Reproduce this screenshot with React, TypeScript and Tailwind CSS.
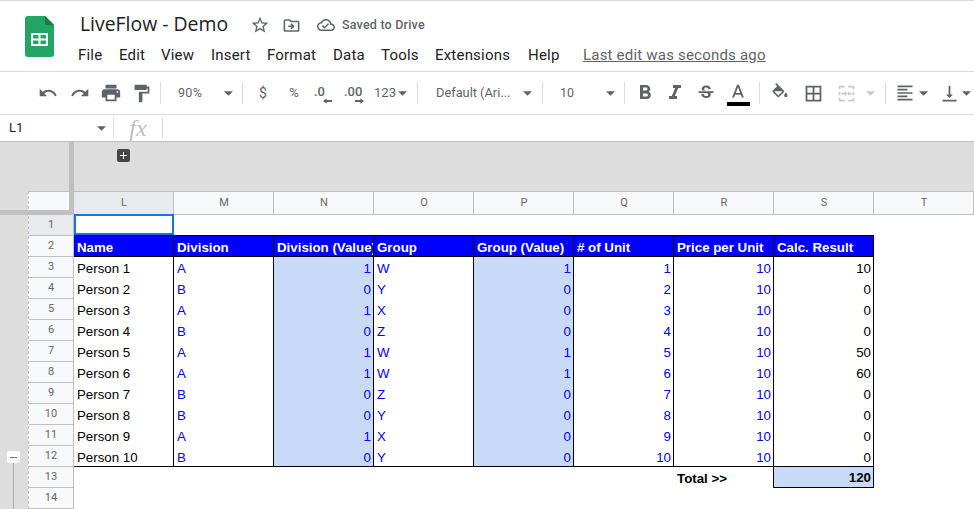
import type { ReactNode } from 'react'

const ROWS = [
  ['Person 1', 'A', 1, 'W', 1, 1, 10, 10],
  ['Person 2', 'B', 0, 'Y', 0, 2, 10, 0],
  ['Person 3', 'A', 1, 'X', 0, 3, 10, 0],
  ['Person 4', 'B', 0, 'Z', 0, 4, 10, 0],
  ['Person 5', 'A', 1, 'W', 1, 5, 10, 50],
  ['Person 6', 'A', 1, 'W', 1, 6, 10, 60],
  ['Person 7', 'B', 0, 'Z', 0, 7, 10, 0],
  ['Person 8', 'B', 0, 'Y', 0, 8, 10, 0],
  ['Person 9', 'A', 1, 'X', 0, 9, 10, 0],
  ['Person 10', 'B', 0, 'Y', 0, 10, 10, 0],
] as const

const HEADERS = ['Name', 'Division', 'Division (Value)', 'Group', 'Group (Value)', '# of Unit', 'Price per Unit', 'Calc. Result']
const COLS = ['L', 'M', 'N', 'O', 'P', 'Q', 'R', 'S', 'T']
const MENU = [
  ['File', 'w-[41px]'], ['Edit', 'w-[42px]'], ['View', 'w-[50px]'], ['Insert', 'w-[56px]'],
  ['Format', 'w-[66px]'], ['Data', 'w-[48px]'], ['Tools', 'w-[54px]'], ['Extensions', 'w-[93px]'], ['Help', 'w-[55px]'],
] as const

function Icon({ d, size = 18, color = '#5f6368' }: { d: string; size?: number; color?: string }) {
  return (
    <svg width={size} height={size} viewBox="0 0 24 24" fill={color} className="shrink-0">
      <path d={d} />
    </svg>
  )
}

function Caret({ color = '#5f6368' }: { color?: string }) {
  return (
    <svg width="9" height="5" viewBox="0 0 10 5" fill={color} className="shrink-0">
      <path d="M0 0h10L5 5z" />
    </svg>
  )
}

function Sep() {
  return <div className="h-[22px] w-px shrink-0 bg-[#dadce0]" />
}

function Slot({ w, children }: { w: string; children?: ReactNode }) {
  return <div className={`flex h-full shrink-0 items-center justify-center ${w}`}>{children}</div>
}

function Arrow({ left }: { left?: boolean }) {
  return (
    <svg width="9" height="6" viewBox="0 0 10 6" fill="#5f6368" className={`self-end ${left ? 'rotate-180' : ''}`}>
      <path d="M0 2h6V0l4 3-4 3V4H0z" />
    </svg>
  )
}

function SheetsLogo() {
  return (
    <svg width="29" height="41" viewBox="0 0 29 41" className="shrink-0">
      <path d="M3 0h17l9 9v29a3 3 0 0 1-3 3H3a3 3 0 0 1-3-3V3a3 3 0 0 1 3-3z" fill="#23a566" />
      <path d="M20 0l9 9h-7a2 2 0 0 1-2-2z" fill="#188038" />
      <path d="M6 17h17v13H6z" fill="#fff" />
      <path d="M8 19h5.500v3.500H8zM15.500 19H21v3.500h-5.500zM8 24.500h5.500V28H8zM15.500 24.500H21V28h-5.500z" fill="#23a566" />
    </svg>
  )
}

function Toolbar() {
  return (
    <div className="flex h-[43px] items-center border-b border-[#dadce0] pl-[32px] font-['Roboto',sans-serif] text-[#5f6368]">
      <Slot w="w-[32px]"><Icon size={20} d="M12.500 8c-2.650 0-5.050.99-6.900 2.600L2 7v9h9l-3.620-3.620c1.390-1.160 3.160-1.880 5.120-1.880 3.540 0 6.550 2.310 7.600 5.500l2.370-.78C21.080 11.030 17.150 8 12.500 8z" /></Slot>
      <Slot w="w-[32px]"><Icon size={20} d="M18.400 10.600C16.550 8.990 14.150 8 11.500 8c-4.650 0-8.580 3.030-9.960 7.220L3.900 16c1.050-3.190 4.050-5.500 7.600-5.500 1.950 0 3.730.72 5.120 1.880L13 16h9V7l-3.600 3.600z" /></Slot>
      <Slot w="w-[29px]"><Icon size={22} d="M19 8H5c-1.660 0-3 1.340-3 3v6h4v4h12v-4h4v-6c0-1.660-1.340-3-3-3zm-3 11H8v-5h8v5zm3-7c-.55 0-1-.45-1-1s.45-1 1-1 1 .45 1 1-.45 1-1 1zm-1-9H6v4h12V3z" /></Slot>
      <Slot w="w-[32px]"><Icon size={21} d="M18 4V3c0-.55-.45-1-1-1H5c-.55 0-1 .45-1 1v4c0 .55.45 1 1 1h12c.55 0 1-.45 1-1V6h1v4H9v11c0 .55.45 1 1 1h2c.55 0 1-.45 1-1v-9h8V4h-3z" /></Slot>
      <Slot w="w-[3px]" />
      <Sep />
      <div className="flex h-full w-[81px] shrink-0 items-center pl-[17px] text-[12.5px]">
        <span className="w-[46px] tracking-[.3px]">90%</span>
        <Caret />
      </div>
      <Sep />
      <Slot w="w-[40px]"><span className="text-[14px]">$</span></Slot>
      <Slot w="w-[22px]"><span className="text-[13px]">%</span></Slot>
      <Slot w="w-[36px]">
        <div className="flex w-[18px] flex-col pt-[3px] leading-none">
          <span className="text-[13px] font-medium leading-[13px]">.0</span>
          <Arrow left />
        </div>
      </Slot>
      <Slot w="w-[26px]">
        <div className="flex w-[20px] flex-col pt-[3px] leading-none">
          <span className="text-[13px] font-medium leading-[13px]">.00</span>
          <Arrow />
        </div>
      </Slot>
      <Slot w="w-[47px]">
        <span className="text-[13px]">123</span>
        <span className="ml-[2px]"><Caret /></span>
      </Slot>
      <Slot w="w-[3px]" />
      <Sep />
      <div className="flex h-full w-[124px] shrink-0 items-center pl-[18px] text-[12.8px]">
        <span className="w-[87px] whitespace-nowrap">Default (Ari...</span>
        <Caret />
      </div>
      <Sep />
      <div className="flex h-full w-[81px] shrink-0 items-center pl-[17px] text-[12.5px]">
        <span className="w-[46px]">10</span>
        <Caret />
      </div>
      <Sep />
      <Slot w="w-[39px]"><Icon size={24} d="M15.600 10.790c.97-.67 1.650-1.770 1.650-2.790 0-2.260-1.750-4-4-4H7v14h7.040c2.090 0 3.710-1.700 3.710-3.790 0-1.520-.86-2.820-2.150-3.420zM10 6.500h3c.83 0 1.500.67 1.500 1.500s-.67 1.500-1.500 1.500h-3v-3zm3.500 9H10v-3h3.500c.83 0 1.500.67 1.500 1.500s-.67 1.500-1.500 1.500z" /></Slot>
      <Slot w="w-[21px]"><Icon size={24} d="M10 4v3h2.210l-3.420 8H6v3h8v-3h-2.210l3.420-8H18V4z" /></Slot>
      <Slot w="w-[41px]"><Icon size={20} d="M7.240 8.750c-.26-.48-.39-1.030-.39-1.670 0-.61.13-1.160.4-1.670.26-.5.63-.93 1.110-1.290.48-.35 1.050-.63 1.700-.83.66-.19 1.390-.29 2.180-.29.81 0 1.540.11 2.210.34.66.22 1.230.54 1.690.94.47.4.83.88 1.080 1.430.25.55.38 1.150.38 1.810h-3.010c0-.31-.05-.59-.15-.85-.09-.27-.24-.49-.44-.68-.2-.19-.45-.33-.75-.44-.3-.1-.66-.16-1.060-.16-.39 0-.74.04-1.030.13-.29.09-.53.21-.72.36-.19.16-.34.34-.44.55-.1.21-.15.43-.15.66 0 .48.25.88.74 1.210.38.25.77.48 1.410.7H7.390c-.05-.08-.11-.17-.15-.25zM21 12v-2H3v2h9.620c.18.07.4.14.55.2.37.17.66.34.87.51.21.17.35.36.43.57.07.2.11.43.11.69 0 .23-.05.45-.14.66-.09.2-.23.38-.42.53-.19.15-.42.26-.71.35-.29.08-.63.13-1.010.13-.43 0-.83-.04-1.180-.13s-.66-.23-.91-.42c-.25-.19-.45-.44-.59-.75-.14-.31-.25-.76-.25-1.210H6.400c0 .55.08 1.130.24 1.580.16.45.37.85.65 1.210.28.35.6.66.98.92.37.26.78.48 1.220.65.44.17.9.3 1.380.39.48.08.96.13 1.440.13.8 0 1.530-.09 2.180-.28s1.210-.45 1.670-.79c.46-.34.82-.77 1.070-1.270s.38-1.070.38-1.710c0-.6-.1-1.140-.31-1.610-.05-.11-.11-.23-.17-.33H21z" /></Slot>
      <Slot w="w-[24px]">
        <div className="flex flex-col items-center pt-[1px]">
          <Icon size={22} color="#5f6368" d="M11 3L5.500 17h2.250l1.120-3h6.250l1.120 3h2.250L13 3h-2zm-1.380 9L12 5.670 14.380 12H9.620z" />
          <div className="-mt-[2px] h-[4px] w-[23px] bg-black" />
        </div>
      </Slot>
      <Slot w="w-[9px]" />
      <Sep />
      <Slot w="w-[40px]"><Icon size={20} d="M16.560 8.940L7.620 0 6.210 1.410l2.380 2.380-5.150 5.150c-.59.59-.59 1.540 0 2.120l5.500 5.500c.29.29.68.44 1.060.44s.77-.15 1.060-.44l5.500-5.500c.59-.58.59-1.530 0-2.120zM5 10h10l-5 5zM19 11.500s-2 2.170-2 3.500c0 1.100.9 2 2 2s2-.9 2-2c0-1.330-2-3.500-2-3.500z" /></Slot>
      <Slot w="w-[26px]"><Icon size={21} d="M3 3v18h18V3H3zm8 16H5v-6h6v6zm0-8H5V5h6v6zm8 8h-6v-6h6v6zm0-8h-6V5h6v6z" /></Slot>
      <Slot w="w-[40px]"><Icon size={21} color="#c7c9cc" d="M3 3h7v2H5v2H3zM14 3h7v4h-2V5h-5zM3 10h2v4H3zM19 10h2v4h-2zM3 17h2v2h5v2H3zM19 17h2v4h-7v-2h5zM6 11h4V9l3 3-3 3v-2H6zM18 13h-3v2l-2-3 2-3v2h3z" /></Slot>
      <Slot w="w-[9px]"><Caret color="#c7c9cc" /></Slot>
      <Slot w="w-[10px]" />
      <Sep />
      <Slot w="w-[11px]" />
      <Slot w="w-[16px]"><Icon size={20} d="M15 15H3v2h12v-2zm0-8H3v2h12V7zM3 13h18v-2H3v2zm0 8h18v-2H3v2zM3 3v2h18V3H3z" /></Slot>
      <Slot w="w-[20px]"><Caret /></Slot>
      <Slot w="w-[4px]" />
      <Slot w="w-[24px]"><Icon size={21} d="M16 13h-3V3h-2v10H8l4 4 4-4zM4 19v2h16v-2H4z" /></Slot>
      <Slot w="w-[10px]"><Caret /></Slot>
    </div>
  )
}

function Cell({ className = '', low, children }: { className?: string; low?: boolean; children?: ReactNode }) {
  return (
    <div className={`flex h-[21px] w-[100px] shrink-0 items-center overflow-hidden whitespace-nowrap border-r border-black pl-[3px] pr-[2px] ${low ? 'pt-[3px]' : 'pt-[2px]'} ${className}`}>
      {children}
    </div>
  )
}

function RowHead({ n, className = 'bg-[#f8f9fa]' }: { n: number; className?: string }) {
  return (
    <div className={`flex h-[21px] w-[45px] shrink-0 items-center justify-center border-b border-r border-[#c0c0c0] font-['Roboto',sans-serif] text-[11px] text-[#666] ${className}`}>
      {n}
    </div>
  )
}

function Sheet() {
  return (
    <div className="flex-1 overflow-hidden border-l border-dashed border-[#c0c0c0] bg-white font-['Liberation_Sans',Arial,sans-serif] text-[13.3px]">
      {/* column letters */}
      <div className="flex h-[24px] border-b border-t border-[#c0c0c0] bg-[#f8f9fa] font-['Roboto',sans-serif] text-[11px] text-[#666]">
        <div className="w-[45px] shrink-0 border-r border-[#c0c0c0]" />
        {COLS.map((c, i) => (
          <div key={c} className={`flex w-[100px] shrink-0 items-center justify-center border-r border-[#c0c0c0] pl-px ${i === 0 ? 'bg-[#e8eaed]' : ''}`}>{c}</div>
        ))}
      </div>

      <div className="flex h-[21px]">
        <RowHead n={1} className="bg-[#e8eaed]" />
        <div className="h-[21px] w-[100px] shrink-0 border-b border-black">
          <div className="-mt-px h-[21px] w-full border-2 border-[#1a73e8] bg-white" />
        </div>
        <div className="h-[21px] w-[700px] shrink-0 border-b border-black" />
      </div>

      <div className="flex h-[21px]">
        <RowHead n={2} />
        {HEADERS.map(h => (
          <Cell key={h} low className="border-b bg-[#0000ff] font-bold text-white">{h}</Cell>
        ))}
      </div>

      {ROWS.map((r, i) => {
        const isLast = i === 9
        const last = isLast ? 'border-b' : ''
        return (
          <div key={r[0]} className="flex h-[21px]">
            <RowHead n={i + 3} />
            <Cell low={isLast} className={`text-black ${last}`}>{r[0]}</Cell>
            <Cell low={isLast} className={`text-[#0000ff] ${last}`}>{r[1]}</Cell>
            <Cell low={isLast} className={`justify-end bg-[#c9daf8] text-[#0000ff] ${last}`}>{r[2]}</Cell>
            <Cell low={isLast} className={`text-[#0000ff] ${last}`}>{r[3]}</Cell>
            <Cell low={isLast} className={`justify-end bg-[#c9daf8] text-[#0000ff] ${last}`}>{r[4]}</Cell>
            <Cell low={isLast} className={`justify-end text-[#0000ff] ${last}`}>{r[5]}</Cell>
            <Cell low={isLast} className={`justify-end text-[#0000ff] ${last}`}>{r[6]}</Cell>
            <Cell low={isLast} className={`justify-end text-black ${last}`}>{r[7]}</Cell>
          </div>
        )
      })}

      <div className="flex h-[21px]">
        <RowHead n={13} />
        <div className="w-[600px] shrink-0" />
        <Cell className="font-bold text-black">Total &gt;&gt;</Cell>
        <Cell className="justify-end border-b bg-[#c9daf8] font-bold text-black">120</Cell>
      </div>

      <div className="flex h-[21px]">
        <RowHead n={14} />
      </div>
    </div>
  )
}

export default function App() {
  return (
    <div className="relative flex h-[509px] w-[974px] flex-col overflow-hidden bg-white font-['Roboto',sans-serif]">
      {/* title + menu */}
      <div className="flex h-[72px] border-b border-t border-[#dadce0]">
        <div className="flex w-[80px] shrink-0 pl-[25px] pt-[15px]"><SheetsLogo /></div>
        <div className="flex flex-col">
          <div className="flex h-[36px] items-end">
            <span className="w-[170px] whitespace-nowrap font-['Open_Sans',sans-serif] text-[19.4px] leading-[26px] text-[#202124]">LiveFlow - Demo</span>
            <div className="mb-[2px] flex items-center">
              <Icon size={20} d="M22 9.240l-7.190-.62L12 2 9.190 8.630 2 9.240l5.460 4.730L5.820 21 12 17.270 18.180 21l-1.630-7.030L22 9.240zM12 15.400l-3.760 2.270 1-4.280-3.320-2.880 4.380-.38L12 6.100l1.710 4.040 4.380.38-3.320 2.880 1 4.280L12 15.400z" />
              <span className="ml-[12px]"><Icon size={19} d="M20 6h-8l-2-2H4c-1.100 0-2 .9-2 2v12c0 1.100.9 2 2 2h16c1.100 0 2-.9 2-2V8c0-1.100-.9-2-2-2zm0 12H4V6h5.170l2 2H20v10zM12.160 14H8v-2h4.160L10.600 10.400 12 9l4 4-4 4-1.400-1.400z" /></span>
              <span className="ml-[16px]"><Icon size={18} d="M19.350 10.040C18.670 6.590 15.640 4 12 4 9.110 4 6.600 5.640 5.350 8.040 2.340 8.360 0 10.910 0 14c0 3.310 2.690 6 6 6h13c2.760 0 5-2.240 5-5 0-2.640-2.050-4.780-4.650-4.960zM19 18H6c-2.210 0-4-1.790-4-4 0-2.050 1.530-3.760 3.560-3.970l1.070-.11.5-.95C8.080 7.140 9.940 6 12 6c2.620 0 4.880 1.860 5.390 4.430l.3 1.500 1.530.11c1.560.1 2.780 1.410 2.780 2.960 0 1.650-1.350 3-3 3zm-9-3.820l-2.090-2.090L6.500 13.500 10 17l6.010-6.010-1.410-1.410z" /></span>
              <span className="ml-[7px] whitespace-nowrap text-[12.5px] font-medium tracking-[.2px] text-[#5f6368]">Saved to Drive</span>
            </div>
          </div>
          <div className="-ml-[2px] mt-[7px] flex items-center text-[15px] tracking-[.2px] text-[#202124]">
            {MENU.map(([label, w]) => <span key={label} className={w}>{label}</span>)}
            <span className="whitespace-nowrap text-[#5f6368] underline">Last edit was seconds ago</span>
          </div>
        </div>
      </div>

      <Toolbar />

      {/* formula bar */}
      <div className="flex h-[27px] items-center border-b border-[#c0c0c0]">
        <div className="flex w-[113px] shrink-0 items-center justify-between pl-[9px] pr-[7px] text-[13px] text-[#202124]">
          <span>L1</span>
          <Caret />
        </div>
        <div className="h-[20px] w-px bg-[#dadce0]" />
        <span className="w-[48px] text-center font-['Liberation_Serif',serif] text-[24px] italic leading-none text-[#bdbdbd]">fx</span>
        <div className="h-[20px] w-px bg-[#dadce0]" />
      </div>

      {/* outline gutter + grid */}
      <div className="flex h-[49px] shrink-0 items-start bg-[#dddddd] pl-[117px] pt-[7px]">
        <div className="flex h-[13px] w-[13px] items-center justify-center rounded-[2px] bg-[#444] text-white">
          <svg width="7" height="7" viewBox="0 0 7 7" fill="#fff"><path d="M3 0h1v3h3v1H4v3H3V4H0V3h3z" /></svg>
        </div>
      </div>
      <div className="flex flex-1 overflow-hidden">
        <div className="w-[28px] shrink-0 bg-[#dddddd]" />
        <Sheet />
      </div>

      {/* frozen pane handles and the group toggle sit on top of the grid */}
      <div className="absolute left-[69px] top-[142px] h-[72px] w-[5px] bg-[#c0c0c0]" />
      <div className="absolute left-0 top-[210px] h-[5px] w-[74px] bg-[#c0c0c0]" />
      <div className="absolute left-[7px] top-[451px] flex h-[12px] w-[13px] items-center justify-center rounded-[2px] bg-white">
        <div className="h-px w-[7px] bg-[#777]" />
      </div>
      <div className="absolute left-[13px] top-[463px] h-[46px] w-px bg-[#aaa]" />
    </div>
  )
}
